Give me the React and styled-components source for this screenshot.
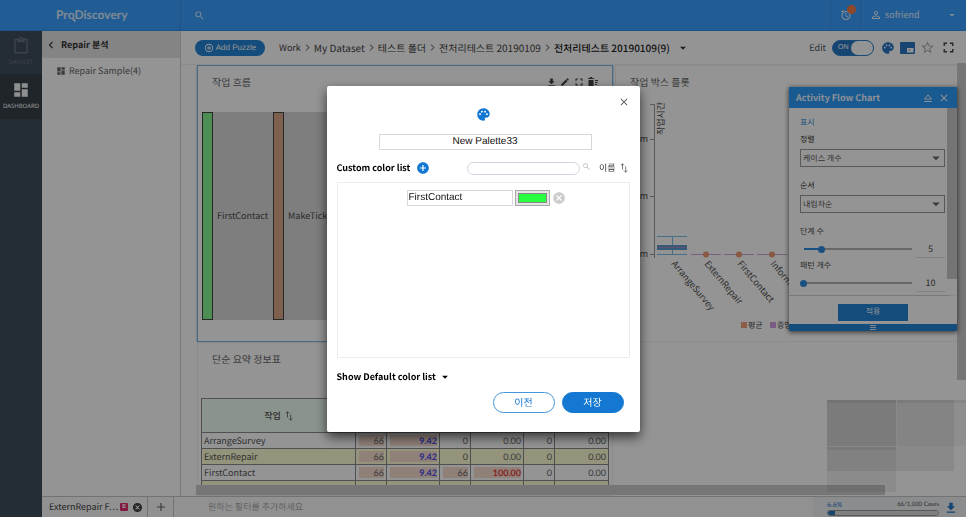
import React, { useState } from 'react';
import styled, { createGlobalStyle, css } from 'styled-components';
import {
  MdAdd, MdAddCircle, MdAddCircleOutline, MdAlarm, MdArrowDropDown, MdCancel, MdChevronLeft,
  MdChevronRight, MdClose, MdContentPaste, MdDashboard, MdEdit, MdFileDownload, MdFullscreen,
  MdPalette, MdPersonOutline, MdSearch, MdStarBorder,
} from 'react-icons/md';

const sans = '"Noto Sans CJK KR", "Noto Sans", sans-serif';
const arial = '"Liberation Sans", Arial, "Noto Sans CJK KR", sans-serif';
const lato = 'Lato, "Noto Sans CJK KR", sans-serif';
const blue = '#1477d1';

const Global = createGlobalStyle`
  *, *::before, *::after { box-sizing: border-box; }
  body { margin: 0; overflow: hidden; background: #fff; color: #4c4c4c; font: 10px/16px ${sans}; text-rendering: geometricPrecision; }
  button, input, select { font: inherit; color: inherit; margin: 0; padding: 0; text-rendering: inherit; }
  button { background: none; border: 0; display: inline-flex; align-items: center; justify-content: center; }
  a { color: inherit; text-decoration: none; }
  h1, h2, h3, p { margin: 0; font-size: inherit; font-weight: inherit; }
  svg { display: block; flex: none; }
`;

const Page = styled.div`
  height: 100vh;
  display: grid;
  grid-template: 31px minmax(0, 1fr) 21px / 42px 139px minmax(0, 1fr);
`;

/* Top bar */
const TopBar = styled.header`
  grid-column: 1 / -1;
  display: grid;
  grid-template-columns: 181px 1fr 30px 105px;
  background: #39a0ff;
  border-bottom: 1px solid #2a90f0;
  color: #e8f3ff;
`;
const TopCell = styled.div`
  display: flex;
  align-items: center;
  gap: 4px;
  padding: ${(p) => p.$pad || '0'};
  border-right: 1px solid #3792e8;
`;
const Logo = styled.h1`
  font: 700 12px/16px ${lato};
  color: #dcecff;
`;
const LogoLens = styled.span`
  position: relative;
  &::after {
    content: '';
    position: absolute;
    right: -1px;
    bottom: 1px;
    width: 4px;
    height: 2px;
    background: #dcecff;
    transform: rotate(45deg);
  }
`;
const AlarmButton = styled.button`
  position: relative;
  &::after {
    content: '';
    position: absolute;
    top: -4px;
    right: -4px;
    width: 9px;
    height: 9px;
    border-radius: 50%;
    background: #f57a48;
  }
`;
const UserButton = styled.button`
  flex: 1;
  gap: 3px;
  padding: 0 8px 0 9px;
  font-size: 9px;
  span { flex: 1; text-align: left; }
`;

/* Left columns */
const Rail = styled.nav`
  grid-row: 2 / 4;
  background: #414e5b;
`;
const RailLink = styled.a`
  height: 44px;
  display: flex;
  flex-direction: column;
  align-items: center;
  padding-top: 6px;
  font: 6px/10px "Noto Sans", sans-serif;
  gap: 2px;
  color: ${(p) => (p.$active ? '#f4f6f8' : '#66727e')};
  background: ${(p) => (p.$active ? '#384149' : 'transparent')};
  border-bottom: 1px solid #35404b;
`;
const Sidebar = styled.aside`
  border-right: 1px solid #cfcfcf;
`;
const SideTitle = styled.h2`
  display: flex;
  align-items: center;
  height: 27px;
  padding-left: 2px;
  gap: 3px;
  background: #e4e4e4;
  color: #333;
  font-size: 9px;
  font-weight: 700;
`;
const SideLink = styled.a`
  display: flex;
  align-items: center;
  height: 25px;
  padding-left: 14px;
  gap: 3px;
  font-size: 9px;
  color: #666;
`;

/* Main area */
const Main = styled.main`
  position: relative;
  display: flex;
  flex-direction: column;
  min-width: 0;
`;
const Toolbar = styled.div`
  flex: none;
  display: flex;
  align-items: center;
  height: 34px;
  padding: 0 9px 0 14px;
  border-bottom: 1px solid #f1f1f1;
`;
const AddPuzzle = styled.button`
  height: 16px;
  width: 70px;
  gap: 2px;
  margin-right: 14px;
  border-radius: 8px;
  background: #2483d6;
  color: #fff;
  font: 8px/16px ${arial};
`;
const Crumbs = styled.nav`
  display: flex;
  align-items: center;
  flex: 1;
  white-space: nowrap;
  color: #444;
  svg { color: #888; }
  button { margin-left: 6px; }
  button svg { color: #333; }
`;
const Crumb = styled.a`
  font-size: ${(p) => (p.$small ? 9 : 10)}px;
  font-weight: ${(p) => (p.$current ? 500 : 400)};
  color: ${(p) => (p.$current ? '#222' : '#444')};
`;
const Tools = styled.div`
  display: flex;
  align-items: center;
  gap: 5px;
  color: #2778c4;
`;
const EditLabel = styled.label`
  display: flex;
  align-items: center;
  gap: 6px;
  margin-right: 2px;
  font-size: 9px;
  color: #555;
`;
const Switch = styled.span`
  position: relative;
  display: flex;
  width: 42px;
  height: 16px;
  padding-left: 5px;
  border: 1px solid #2f80ca;
  border-radius: 8px;
  background: #2778c4;
  color: #fff;
  font: 7px/14px ${arial};
  input { position: absolute; inset: 0; opacity: 0; }
  &::after {
    content: '';
    position: absolute;
    right: 0;
    top: 0;
    width: 22px;
    height: 14px;
    border-radius: 7px;
    background: #fff;
  }
`;
const ToolButton = styled.button`
  color: ${(p) => p.$color || 'inherit'};
`;
const Canvas = styled.div`
  flex: 1;
  min-height: 0;
  overflow: hidden;
  display: grid;
  grid-template: 277px 1fr / 416px minmax(360px, 1fr);
  column-gap: 2px;
  padding-left: 16px;
`;
const Widget = styled.section`
  min-width: 0;
  overflow: hidden;
  border: 1px solid ${(p) => (p.$selected ? '#7fb4e4' : '#f1f1f1')};
  ${(p) => p.$selected && css`box-shadow: 0 0 2px #7fb4e4;`}
`;
const WidgetHead = styled.div`
  display: flex;
  align-items: center;
  justify-content: space-between;
  height: 32px;
  padding: 0 14px;
  color: #666;
`;
const WidgetTools = styled.div`
  display: flex;
  gap: 3px;
  color: #444;
`;
const ChartText = styled.text`
  font: ${(p) => p.$size || 9}px ${sans};
  fill: #4c4c4c;
`;
const Table = styled.table`
  table-layout: fixed;
  width: 408px;
  margin: 23px 0 0 3px;
  border-collapse: collapse;
  color: #555;
  td, th { border: 1px solid #8a8a8a; height: 16px; padding: 0 2px; line-height: 15px; }
  th { height: 34px; background: #eeffF3; font-size: 9px; font-weight: 500; }
  th > span { display: flex; align-items: center; justify-content: center; gap: 4px; }
  tbody tr:nth-child(even) { background: #fffed4; }
`;
const NameCell = styled.td`
  font-size: 9px;
`;
const NumCell = styled.td`
  text-align: right;
  font: ${(p) => (p.$tone ? 700 : 400)} 9px/15px ${lato};
  color: ${(p) => p.$tone || '#666'};
  ${(p) => p.$bar && css`background: linear-gradient(#f6dccf, #f6dccf) right 2px center / calc(100% - 5px) 11px no-repeat;`}
`;
const VBar = styled.div`
  position: absolute;
  right: 0;
  top: 32px;
  width: 9px;
  height: 317px;
  background: #cbcbcb;
`;
const HBar = styled.div`
  position: absolute;
  left: 15px;
  right: 81px;
  bottom: 1px;
  height: 10px;
  background: #cbcbcb;
`;
const MiniMap = styled.div`
  position: absolute;
  right: 0;
  bottom: 3px;
  width: 139px;
  height: 93px;
  display: grid;
  grid-template: 46px 45px / 69px 1fr;
  gap: 1px;
  &::before {
    content: '';
    position: absolute;
    inset: 0 12px 22px 0;
    background: rgba(0, 0, 0, 0.07);
  }
`;
const MiniTile = styled.div`
  background: rgba(0, 0, 0, ${(p) => p.$shade});
  border-top: 3px solid rgba(0, 0, 0, 0.06);
`;

/* Settings panel */
const Panel = styled.section`
  position: absolute;
  top: 56px;
  right: 9px;
  width: 168px;
  background: #fff;
  box-shadow: 0 1px 5px rgba(0, 0, 0, 0.7);
`;
const PanelHead = styled.div`
  display: flex;
  align-items: center;
  height: 21px;
  padding: 0 7px;
  gap: 5px;
  background: #2b9cfa;
  color: #f0f6ff;
  font-size: 9px;
  font-weight: 700;
  h2 { flex: 1; }
`;
const PanelBody = styled.div`
  height: 188px;
  padding: 7px 2px 0 11px;
  border-right: 10px solid transparent;
  background: linear-gradient(#c8c8c8, #c8c8c8) right top / 10px 171px no-repeat border-box;
  border-bottom: 1px solid #d0d0d0;
`;
const PanelLink = styled.h3`
  font-size: 8px;
  color: #2b8bd8;
`;
const Field = styled.label`
  display: block;
  height: 46px;
  font-size: 8px;
  line-height: 18px;
  color: #333;
`;
const SelectBox = styled.span`
  display: block;
  position: relative;
  svg { position: absolute; right: 0; top: 0; pointer-events: none; color: #666; }
  select {
    display: block;
    appearance: none;
    width: 100%;
    height: 18px;
    padding-left: 2px;
    background: transparent;
    border: 1px solid #999;
    border-radius: 0;
    font-size: 8px;
    color: #555;
  }
`;
const SliderField = styled.div`
  font-size: 8px;
  line-height: 18px;
  height: 34px;
`;
const SliderRow = styled.div`
  display: flex;
  align-items: center;
  height: 16px;
  gap: 1px;
`;
const Range = styled.input.attrs({ type: 'range' })`
  appearance: none;
  width: 115px;
  height: 8px;
  background: linear-gradient(90deg, #2b8be0 ${(p) => p.$fill}%, #b3b3b3 ${(p) => p.$fill}%) center / 108px 2px no-repeat;
  &::-webkit-slider-thumb {
    appearance: none;
    width: 7px;
    height: 7px;
    border-radius: 50%;
    background: #2b8be0;
  }
`;
const NumberBox = styled.input`
  width: 29px;
  min-width: 0;
  height: 17px;
  border: 0;
  border-bottom: 1px solid #dedede;
  background: none;
  text-align: center;
  font-size: 9px;
`;
const PanelFoot = styled.div`
  display: flex;
  justify-content: center;
  align-items: center;
  height: 28px;
  padding-top: 4px;
`;
const Apply = styled.button`
  width: 70px;
  height: 17px;
  background: #2483d6;
  color: #e8f3ff;
  font-size: 8px;
`;
const Grip = styled.div`
  height: 7px;
  display: flex;
  flex-direction: column;
  align-items: center;
  justify-content: center;
  gap: 1px;
  background: #2483d6;
  i { width: 6px; height: 1px; background: #d8e8f8; }
`;

/* Footer */
const Footer = styled.footer`
  grid-column: 2 / 4;
  display: flex;
  align-items: center;
  border-top: 1px solid #c4c4c4;
  background: #fafafa;
`;
const FooterTab = styled.div`
  display: flex;
  align-items: center;
  align-self: stretch;
  width: 106px;
  padding: 0 4px 0 7px;
  gap: 2px;
  border-right: 1px solid #c4c4c4;
  font-size: 9px;
  white-space: nowrap;
  color: #444;
  button { margin-left: auto; }
`;
const TabTag = styled.b`
  width: 8px;
  height: 8px;
  border-radius: 1px;
  background: #e02d6f;
  color: #fff;
  font: 700 6px/8px ${arial};
  text-align: center;
`;
const AddTab = styled.button`
  align-self: stretch;
  width: 26px;
  border-right: 1px solid #c4c4c4;
  color: #666;
`;
const FilterInput = styled.input`
  flex: 1;
  min-width: 0;
  height: 16px;
  margin-left: 34px;
  border: 0;
  background: none;
  font-size: 9px;
  &::placeholder { color: #aaa; opacity: 1; }
`;
const Usage = styled.div`
  display: flex;
  align-items: center;
  justify-content: space-between;
  align-self: stretch;
  width: 153px;
  padding: 1px 8px 0 14px;
  background: #eef2f5;
  color: #2778c4;
`;
const UsageMeter = styled.label`
  width: 112px;
  font: 7px/10px ${lato};
  > span { display: flex; justify-content: space-between; }
  em { font-style: normal; font-size: 6px; color: #555; }
  progress {
    display: block;
    appearance: none;
    width: 112px;
    height: 6px;
    border: 1px solid #9a9a9a;
    border-radius: 3px;
    overflow: hidden;
  }
  progress::-webkit-progress-bar { background: #ddd; }
  progress::-webkit-progress-value { background: #2778c4; }
`;

/* Palette dialog */
const Backdrop = styled.div`
  position: fixed;
  inset: 0;
  display: flex;
  align-items: center;
  justify-content: center;
  background: rgba(0, 0, 0, 0.42);
`;
const Dialog = styled.section`
  position: relative;
  width: 313px;
  padding: 21px 10px 19px;
  display: flex;
  flex-direction: column;
  background: #fff;
  border-radius: 2px;
  box-shadow: 0 5px 12px rgba(0, 0, 0, 0.65);
  color: #000;
`;
const CloseButton = styled.button`
  position: absolute;
  top: 10px;
  right: 10px;
  color: #666;
`;
const DialogIcon = styled.div`
  align-self: center;
  color: ${blue};
`;
const TextBox = styled.input`
  width: ${(p) => p.$width}px;
  height: 16px;
  padding: 0 1px;
  border: 1px solid #d8d8d8;
  color: #111;
  font: 10px/14px ${arial};
  text-align: ${(p) => p.$align || 'left'};
`;
const NameRow = styled.div`
  display: flex;
  justify-content: center;
  padding: 12px 0 0 4px;
`;
const ListHead = styled.div`
  display: flex;
  align-items: center;
  height: 32px;
  padding-top: 5px;
  font-size: 9px;
  h2 { font-weight: 700; margin-right: 6px; }
`;
const SearchBox = styled.label`
  display: flex;
  gap: 2px;
  margin-left: auto;
  margin-right: 8px;
  color: #bbb;
  input { width: 113px; height: 13px; padding: 0 6px; border: 1px solid #cfd4e0; border-radius: 7px; }
`;
const SortButton = styled.button`
  gap: 4px;
  padding-right: 2px;
  font-size: 9px;
  color: #333;
`;
const ColorList = styled.div`
  height: 176px;
  padding-top: 7px;
  border: 1px solid #ececec;
`;
const ColorRow = styled.div`
  display: flex;
  align-items: center;
  justify-content: center;
  gap: 2px;
  padding-left: 6px;
  color: #ccc;
`;
const Swatch = styled.input.attrs({ type: 'color' })`
  appearance: none;
  width: 35px;
  height: 16px;
  padding: 2px;
  border: 1px solid #a9a9a9;
  background: #e4e4e4;
  &::-webkit-color-swatch-wrapper { padding: 0; }
  &::-webkit-color-swatch { border: 1px solid #888; border-radius: 0; }
`;
const DefaultToggle = styled.button`
  align-self: flex-start;
  height: 16px;
  margin-top: 11px;
  gap: 2px;
  font-size: 9px;
  font-weight: 700;
`;
const Actions = styled.div`
  display: flex;
  justify-content: flex-end;
  gap: 7px;
  padding: 7px 6px 0;
`;
const Action = styled.button`
  width: 62px;
  height: 21px;
  border: 1px solid ${(p) => (p.$primary ? blue : '#4596dd')};
  border-radius: 11px;
  background: ${(p) => (p.$primary ? blue : '#fff')};
  color: ${(p) => (p.$primary ? '#fff' : blue)};
  font-size: 10px;
`;

const SortIcon = () => (
  <svg width="8" height="10" viewBox="0 0 8 10" fill="none" stroke="#555" strokeWidth="0.8">
    <path d="M2.500 6.500V.8M.9 2.400 2.500.8l1.600 1.600M5.700 3.500v5.700M4.100 7.600l1.600 1.600 1.600-1.600" />
  </svg>
);

const EjectIcon = () => (
  <svg width="10" height="10" viewBox="0 0 10 10" fill="none" stroke="currentColor" strokeWidth="1">
    <path d="M1.500 6 5 2l3.500 4zM1 8.500h8" />
  </svg>
);

const TrashListIcon = () => (
  <svg width="10" height="10" viewBox="0 0 10 10" fill="currentColor">
    <path d="M0 1h2V0h2v1h2v1H0zM.5 3h5v6h-5zM7 3h3v1H7zM7 5h2.500v1H7zM7 7h2v1H7z" />
  </svg>
);

const MiniMapIcon = () => (
  <svg width="15" height="12" viewBox="0 0 15 12">
    <rect width="15" height="12" rx="1" fill="currentColor" />
    <path d="M7 6h6.500v4.500H7z" fill="#fff" />
    <path d="M8.500 7.200h2v1.500h-2z" fill="currentColor" opacity="0.5" />
  </svg>
);

function FlowChart() {
  return (
    <svg width="412" height="224" role="img" aria-label="작업 흐름">
      <rect x="14" y="14" width="398" height="208" fill="#d9d9d9" />
      <rect x="4.500" y="14.500" width="10" height="207" fill="#83f590" stroke="#444" />
      <rect x="75.500" y="14.500" width="10" height="207" fill="#d8a686" stroke="#444" />
      <ChartText x="19" y="121">FirstContact</ChartText>
      <ChartText x="90" y="121">MakeTicket</ChartText>
    </svg>
  );
}

const boxLabels = ['ArrangeSurvey', 'ExternRepair', 'FirstContact', 'InformUser'];

function BoxPlot() {
  return (
    <svg width="340" height="236" role="img" aria-label="작업 박스 플롯">
      <path d="M34 6.500h4.500V160M34 41.500h4.500M34 98.500h4.500M34 156.500h4.500" fill="none" stroke="#9a9a9a" />
      {[44, 101, 159].map((y) => <ChartText key={y} x="32" y={y} textAnchor="end">100m</ChartText>)}
      <ChartText transform="translate(48 37) rotate(-90)">작업시간</ChartText>
      <path d="M41 138.500h30M41 156.500h30M56.500 138v18" stroke="#7fbde8" />
      <rect x="41" y="147" width="30" height="5" fill="#5c9ccc" />
      <path d="M41 149.500h30" stroke="#a989c8" />
      {[0, 1, 2].map((i) => (
        <g key={i}>
          <path d={`M${75 + i * 33} 156.500h30`} stroke="#d2a0dc" />
          <circle cx={90 + i * 33} cy="156.500" r="3" fill="#ee9a72" />
        </g>
      ))}
      {boxLabels.map((label, i) => (
        <ChartText key={label} transform={`translate(${55 + i * 33} 166) rotate(50)`}>{label}</ChartText>
      ))}
      <rect x="125" y="224" width="6" height="6" fill="#f2a27c" />
      <ChartText $size="8" x="132" y="230">평균</ChartText>
      <rect x="154" y="224" width="6" height="6" fill="#d59be2" />
      <ChartText $size="8" x="161" y="230">중앙값</ChartText>
    </svg>
  );
}

const rows = [
  ['ArrangeSurvey', '66', '9.42', '0', '0.00', '0', '0.00'],
  ['ExternRepair', '66', '9.42', '0', '0.00', '0', '0.00'],
  ['FirstContact', '66', '9.42', '66', '100.00', '0', '0.00'],
  ['', '', '', '', '', '', ''],
];
const tones = { '9.42': '#4a4ae8', '100.00': '#e83a3a' };

function SummaryTable() {
  return (
    <Table>
      <colgroup>
        {[154, 31, 53, 31, 53, 31, 54].map((w, i) => <col key={i} width={w} />)}
      </colgroup>
      <thead>
        <tr>
          <th><span>작업 <SortIcon /></span></th>
          <th colSpan="2" />
          <th colSpan="2" />
          <th colSpan="2" />
        </tr>
      </thead>
      <tbody>
        {rows.map(([name, ...values]) => (
          <tr key={name}>
            <NameCell>{name}</NameCell>
            {values.map((v, i) => (
              <NumCell key={i} $tone={tones[v]} $bar={parseFloat(v) > 0}>{v}</NumCell>
            ))}
          </tr>
        ))}
      </tbody>
    </Table>
  );
}

function Slider({ id, label, min, max, initial }) {
  const [value, setValue] = useState(initial);
  const change = (e) => setValue(e.target.value);
  return (
    <SliderField>
      <label htmlFor={id}>{label}</label>
      <SliderRow>
        <Range id={id} min={min} max={max} value={value} onChange={change} $fill={((value - min) / (max - min)) * 100} />
        <NumberBox aria-label={label} value={value} onChange={change} />
      </SliderRow>
    </SliderField>
  );
}

function SettingsPanel() {
  return (
    <Panel>
      <PanelHead>
        <h2>Activity Flow Chart</h2>
        <button aria-label="Collapse"><EjectIcon /></button>
        <button aria-label="Close panel"><MdClose size={12} /></button>
      </PanelHead>
      <PanelBody>
        <PanelLink>표시</PanelLink>
        <Field>정렬
          <SelectBox><select><option>케이스 개수</option></select><MdArrowDropDown size={18} /></SelectBox>
        </Field>
        <Field>순서
          <SelectBox><select><option>내림차순</option></select><MdArrowDropDown size={18} /></SelectBox>
        </Field>
        <Slider id="steps" label="단계 수" min={1} max={25} initial={5} />
        <Slider id="patterns" label="패턴 개수" min={10} max={50} initial={10} />
      </PanelBody>
      <PanelFoot><Apply>적용</Apply></PanelFoot>
      <Grip><i /><i /><i /></Grip>
    </Panel>
  );
}

function PaletteDialog() {
  const [name, setName] = useState('New Palette33');
  const [item, setItem] = useState('FirstContact');
  const [color, setColor] = useState('#28ff43');
  return (
    <Backdrop>
      <Dialog role="dialog" aria-modal="true" aria-label="Palette">
        <CloseButton aria-label="Close"><MdClose size={12} /></CloseButton>
        <DialogIcon><MdPalette size={15} /></DialogIcon>
        <NameRow>
          <TextBox $width={213} $align="center" aria-label="Palette name" value={name} onChange={(e) => setName(e.target.value)} />
        </NameRow>
        <ListHead>
          <h2>Custom color list</h2>
          <ToolButton $color={blue} aria-label="Add color"><MdAddCircle size={14} /></ToolButton>
          <SearchBox><input aria-label="Search colors" /><MdSearch size={9} /></SearchBox>
          <SortButton>이름 <SortIcon /></SortButton>
        </ListHead>
        <ColorList>
          <ColorRow>
            <TextBox $width={106} aria-label="Activity" value={item} onChange={(e) => setItem(e.target.value)} />
            <Swatch aria-label="Color" value={color} onChange={(e) => setColor(e.target.value)} />
            <ToolButton aria-label="Remove color"><MdCancel size={14} /></ToolButton>
          </ColorRow>
        </ColorList>
        <DefaultToggle>Show Default color list <MdArrowDropDown size={14} /></DefaultToggle>
        <Actions>
          <Action>이전</Action>
          <Action $primary>저장</Action>
        </Actions>
      </Dialog>
    </Backdrop>
  );
}

export default function App() {
  return (
    <>
      <Global />
      <Page>
        <TopBar>
          <TopCell $pad="0 0 0 56px"><Logo>Pr<LogoLens>o</LogoLens>Discovery</Logo></TopCell>
          <TopCell $pad="0 13px"><button aria-label="Search"><MdSearch size={11} /></button></TopCell>
          <TopCell $pad="0 9px"><AlarmButton aria-label="Alerts"><MdAlarm size={12} /></AlarmButton></TopCell>
          <UserButton><MdPersonOutline size={12} /><span>sofriend</span><MdArrowDropDown size={12} /></UserButton>
        </TopBar>

        <Rail>
          <RailLink href="#dataset"><MdContentPaste size={18} />DATASET</RailLink>
          <RailLink href="#dashboard" $active><MdDashboard size={18} />DASHBOARD</RailLink>
        </Rail>

        <Sidebar>
          <SideTitle><MdChevronLeft size={14} />Repair 분석</SideTitle>
          <SideLink href="#sample"><MdDashboard size={10} />Repair Sample(4)</SideLink>
        </Sidebar>

        <Main>
          <Toolbar>
            <AddPuzzle><MdAddCircleOutline size={10} />Add Puzzle</AddPuzzle>
            <Crumbs>
              <Crumb href="#work" $small>Work</Crumb><MdChevronRight size={13} />
              <Crumb href="#dataset">My Dataset</Crumb><MdChevronRight size={13} />
              <Crumb href="#folder">테스트 폴더</Crumb><MdChevronRight size={13} />
              <Crumb href="#prep">전처리테스트 20190109</Crumb><MdChevronRight size={13} />
              <Crumb href="#current" $current>전처리테스트 20190109(9)</Crumb>
              <ToolButton aria-label="Versions"><MdArrowDropDown size={14} /></ToolButton>
            </Crumbs>
            <Tools>
              <EditLabel>Edit<Switch>ON<input type="checkbox" defaultChecked /></Switch></EditLabel>
              <ToolButton aria-label="Palette"><MdPalette size={14} /></ToolButton>
              <ToolButton aria-label="Mini map"><MiniMapIcon /></ToolButton>
              <ToolButton $color="#aaa" aria-label="Favorite"><MdStarBorder size={15} /></ToolButton>
              <ToolButton $color="#444" aria-label="Full screen"><MdFullscreen size={17} /></ToolButton>
            </Tools>
          </Toolbar>
          <Canvas>
            <Widget $selected>
              <WidgetHead>
                <h2>작업 흐름</h2>
                <WidgetTools>
                  <button aria-label="Download"><MdFileDownload size={11} /></button>
                  <button aria-label="Edit"><MdEdit size={10} /></button>
                  <button aria-label="Expand"><MdFullscreen size={12} /></button>
                  <button aria-label="Delete"><TrashListIcon /></button>
                </WidgetTools>
              </WidgetHead>
              <FlowChart />
            </Widget>
            <Widget>
              <WidgetHead><h2>작업 박스 플롯</h2></WidgetHead>
              <BoxPlot />
            </Widget>
            <Widget>
              <WidgetHead><h2>단순 요약 정보표</h2></WidgetHead>
              <SummaryTable />
            </Widget>
          </Canvas>
          <VBar />
          <HBar />
          <MiniMap>
            <MiniTile $shade={0.1} />
            <MiniTile $shade={0.04} />
            <MiniTile $shade={0.06} />
          </MiniMap>
          <SettingsPanel />
        </Main>

        <Footer>
          <FooterTab>ExternRepair F⋯<TabTag>E</TabTag><button aria-label="Remove filter"><MdCancel size={11} /></button></FooterTab>
          <AddTab aria-label="Add filter"><MdAdd size={14} /></AddTab>
          <FilterInput aria-label="Filter" placeholder="원하는 필터를 추가하세요" />
          <Usage>
            <UsageMeter><span>6.6%<em>66/1,000 Cases</em></span><progress value="6.6" max="100" /></UsageMeter>
            <button aria-label="Download cases"><MdFileDownload size={14} /></button>
          </Usage>
        </Footer>
      </Page>
      <PaletteDialog />
    </>
  );
}
